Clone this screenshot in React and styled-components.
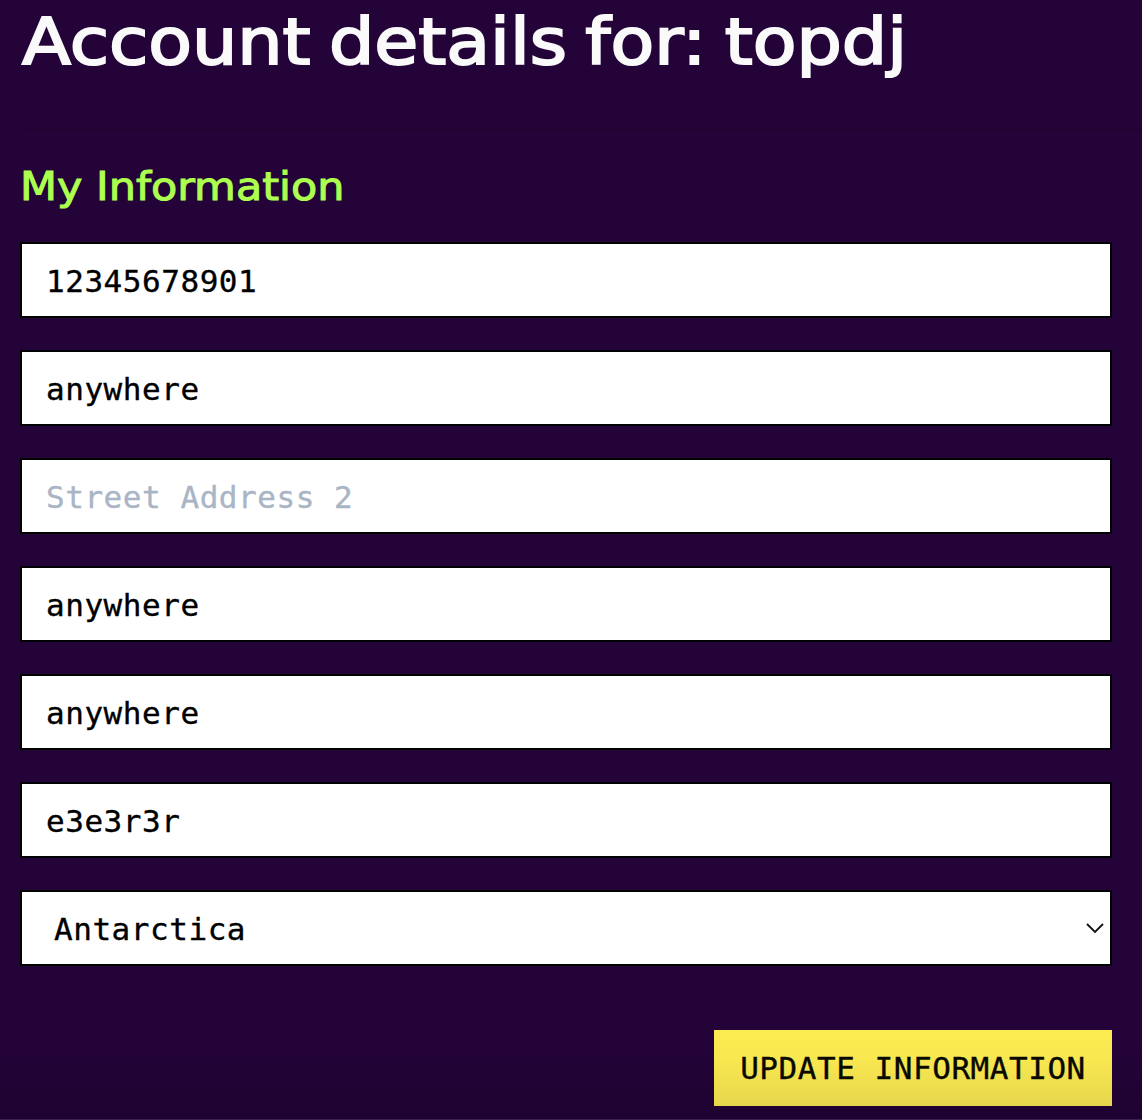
import React from "react";
import styled, { createGlobalStyle } from "styled-components";

const GlobalStyle = createGlobalStyle`
  *, *::before, *::after { box-sizing: border-box; }
  html, body { margin: 0; background: #240339; overflow: hidden; }
`;

const mono = `"DejaVu Sans Mono", "Liberation Mono", monospace`;
const display = `"DejaVu Sans", sans-serif`;

const Page = styled.main`
  display: flex;
  flex-direction: column;
  height: 1120px;
  padding-left: 20px;
  background: linear-gradient(to bottom, #240339 0, #240339 1040px, #1e0230 1119px, #3d1f50 1119px);
`;

const Title = styled.h1`
  align-self: flex-start;
  margin: 0 0 0 2px;
  height: 128px;
  padding-top: 2px;
  font: 400 64px/80px ${display};
  letter-spacing: 0;
  word-spacing: -4px;
  white-space: nowrap;
  color: #fafafa;
  -webkit-text-stroke: 2px #fafafa;
  transform: scaleX(1.117);
  transform-origin: 0 0;
`;

const Divider = styled.hr`
  width: 100%;
  height: 2px;
  margin: 0;
  border: 0;
  background: #210233;
`;

const Subtitle = styled.h2`
  align-self: flex-start;
  margin: 0;
  height: 112px;
  padding-top: 32px;
  font: 400 39px/50px ${display};
  letter-spacing: 0;
  white-space: nowrap;
  color: #adff4f;
  -webkit-text-stroke: 1px #adff4f;
  transform: scaleX(1.1);
  transform-origin: 0 0;
`;

const Form = styled.form`
  display: flex;
  flex-direction: column;
  gap: 32px;
  width: 1092px;
`;

const Field = styled.input`
  display: block;
  width: 100%;
  height: 76px;
  margin: 0;
  padding: 2px 24px 0;
  border: 2px solid #000;
  border-radius: 0;
  outline: 0;
  background: #fff;
  color: #000;
  font: 400 31px/48px ${mono};
  letter-spacing: 0.54px;
  -webkit-text-stroke: 0.35px currentColor;

  &::placeholder {
    color: #a9b5c5;
    opacity: 1;
    -webkit-text-stroke: 0.35px #a9b5c5;
  }
`;

const SelectBox = styled.div`
  display: grid;
  grid-template-columns: 1fr 18px;
  align-items: center;
  height: 76px;
  padding-right: 6px;
  border: 2px solid #000;
  background: #fff;
`;

const Select = styled.select`
  grid-area: 1 / 1 / 2 / 3;
  appearance: none;
  width: 100%;
  height: 72px;
  padding: 2px 24px 0 32px;
  border: 0;
  border-radius: 0;
  outline: 0;
  background: transparent;
  color: #000;
  font: 400 31px/48px ${mono};
  letter-spacing: 0.54px;
  -webkit-text-stroke: 0.35px currentColor;
`;

const Chevron = styled.svg`
  grid-area: 1 / 2 / 2 / 3;
  width: 18px;
  height: 12px;
  pointer-events: none;
`;

const Submit = styled.button`
  align-self: flex-end;
  width: 398px;
  height: 76px;
  margin: 32px 0 0;
  padding: 0;
  border: 0;
  background: linear-gradient(to bottom, #fdeb52 0, #fae850 35%, #e6d64c 100%);
  color: #080900;
  font: 400 31px/48px ${mono};
  letter-spacing: 0.54px;
  -webkit-text-stroke: 0.35px currentColor;
  white-space: nowrap;
`;

const fields = [
  { name: "phone", label: "Phone", value: "12345678901" },
  { name: "address1", label: "Street Address", value: "anywhere" },
  { name: "address2", label: "Street Address 2", value: "" },
  { name: "city", label: "City", value: "anywhere" },
  { name: "state", label: "State", value: "anywhere" },
  { name: "zip", label: "Zip", value: "e3e3r3r" },
];

export default function App() {
  return (
    <>
      <GlobalStyle />
      <Page>
        <Title>Account details for: topdj</Title>
        <Divider />
        <Subtitle>My Information</Subtitle>
        <Form onSubmit={(e) => e.preventDefault()}>
          {fields.map((f) => (
            <Field
              key={f.name}
              name={f.name}
              defaultValue={f.value}
              placeholder={f.value ? undefined : f.label}
              spellCheck={false}
            />
          ))}
          <SelectBox>
            <Select name="country" defaultValue="Antarctica">
              <option>Antarctica</option>
            </Select>
            <Chevron viewBox="0 0 18 12" fill="none" stroke="#111" strokeWidth="1.8">
              <path d="M1 2 L9 10 L17 2" />
            </Chevron>
          </SelectBox>
          <Submit type="submit">UPDATE INFORMATION</Submit>
        </Form>
      </Page>
    </>
  );
}
